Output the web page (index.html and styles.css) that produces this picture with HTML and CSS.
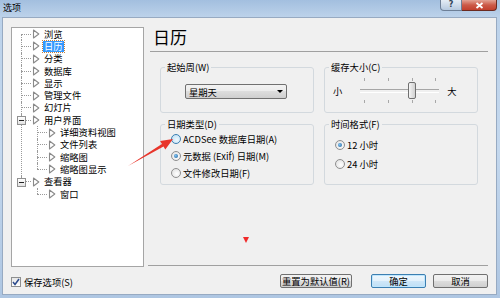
FILE: index.html
```html
<!DOCTYPE html>
<html lang="zh-CN">
<head>
    <meta charset="UTF-8">
    <title>选项</title>
    <link rel="stylesheet" href="styles.css">
</head>
<body>

<svg width="0" height="0" style="position: absolute;">
    <symbol id="tri" viewBox="0 0 8 10">
        <path d="M1.5 1 L6.8 5 L1.5 9 Z" fill="#fff" stroke="#8a8a8a" stroke-width="1.1" stroke-linejoin="round"/>
    </symbol>
</svg>

<div class="window">
    <div class="titlebar">
        <span class="title">选项</span>
        <div class="caption-buttons">
            <span class="cap-help">?</span>
            <span class="cap-close">
                <svg width="9" height="7" viewBox="0 0 9 7"><path d="M1.5 1 L7.5 6 M7.5 1 L1.5 6" stroke="#fff" stroke-width="1.8"/></svg>
            </span>
        </div>
    </div>

    <div class="client">
        <div class="main">
            <ul class="tree">
                <li><span class="node"><svg class="tri"><use href="#tri"/></svg>浏览</span></li>
                <li><span class="node"><svg class="tri"><use href="#tri"/></svg><span class="selected">日历</span></span></li>
                <li><span class="node"><svg class="tri"><use href="#tri"/></svg>分类</span></li>
                <li><span class="node"><svg class="tri"><use href="#tri"/></svg>数据库</span></li>
                <li><span class="node"><svg class="tri"><use href="#tri"/></svg>显示</span></li>
                <li><span class="node"><svg class="tri"><use href="#tri"/></svg>管理文件</span></li>
                <li><span class="node"><svg class="tri"><use href="#tri"/></svg>幻灯片</span></li>
                <li>
                    <b class="toggle"></b>
                    <span class="node"><svg class="tri"><use href="#tri"/></svg>用户界面</span>
                    <ul>
                        <li><span class="node"><svg class="tri"><use href="#tri"/></svg>详细资料视图</span></li>
                        <li><span class="node"><svg class="tri"><use href="#tri"/></svg>文件列表</span></li>
                        <li><span class="node"><svg class="tri"><use href="#tri"/></svg>缩略图</span></li>
                        <li><span class="node"><svg class="tri"><use href="#tri"/></svg>缩略图显示</span></li>
                    </ul>
                </li>
                <li>
                    <b class="toggle"></b>
                    <span class="node"><svg class="tri"><use href="#tri"/></svg>查看器</span>
                    <ul>
                        <li><span class="node"><svg class="tri"><use href="#tri"/></svg>窗口</span></li>
                    </ul>
                </li>
            </ul>

            <div class="page">
                <h1 class="page-title">日历</h1>
                <div class="groups">
                    <fieldset class="group">
                        <legend>起始周(W)</legend>
                        <div class="combo"><span>星期天</span><i class="combo-arrow"></i></div>
                    </fieldset>

                    <fieldset class="group">
                        <legend>缓存大小(C)</legend>
                        <div class="cache-row">
                            <span>小</span>
                            <div class="slider">
                                <div class="ticks"><i></i><i></i><i></i><i></i></div>
                                <div class="track"><span class="thumb"></span></div>
                                <div class="ticks"><i></i><i></i><i></i><i></i></div>
                            </div>
                            <span>大</span>
                        </div>
                    </fieldset>

                    <fieldset class="group">
                        <legend>日期类型(D)</legend>
                        <div class="radios radios-date">
                            <label class="radio"><span class="radio-box hover"></span>ACDSee 数据库日期(A)</label>
                            <label class="radio"><span class="radio-box checked"></span>元数据 (Exif) 日期(M)</label>
                            <label class="radio"><span class="radio-box"></span>文件修改日期(F)</label>
                        </div>
                    </fieldset>

                    <fieldset class="group">
                        <legend>时间格式(F)</legend>
                        <div class="radios radios-time">
                            <label class="radio"><span class="radio-box checked"></span>12 小时</label>
                            <label class="radio"><span class="radio-box"></span>24 小时</label>
                        </div>
                    </fieldset>
                </div>
            </div>
        </div>

        <div class="footer">
            <label class="check">
                <span class="check-box">
                    <svg width="8" height="8" viewBox="0 0 8 8"><path d="M1 4 L3 6.5 L7 1" fill="none" stroke="#2b4a8c" stroke-width="1.5"/></svg>
                </span>
                保存选项(S)
            </label>
            <div class="buttons">
                <button class="btn btn-reset">重置为默认值(R)</button>
                <button class="btn btn-default">确定</button>
                <button class="btn">取消</button>
            </div>
        </div>
    </div>

    <!-- annotation drawn over the dialog -->
    <svg class="marks" width="500" height="298" viewBox="0 0 500 298">
        <polygon points="128,166 163.5,146.5 165.3,149.5 173,139 160.1,140.9 161.9,143.9" fill="#e8352b"/>
        <polygon points="243,237 249,237 246,243" fill="#f02a2a"/>
    </svg>
</div>

</body>
</html>
```

FILE: styles.css
```css
* {
    box-sizing: border-box;
}

body {
    margin: 0;
    font-family: "Noto Sans CJK SC", "Noto Sans", sans-serif;
    font-size: 9.3px;
    line-height: 12px;
    color: #000;
    background: #fff;
}

.window {
    position: relative;
    width: 500px;
    height: 298px;
    display: flex;
    flex-direction: column;
    padding: 0 3px 3px 2px;
    background: linear-gradient(to bottom, #a3bfdf 0%, #bcd2ea 17px, #c4d8ee 50%, #aec6e2 100%);
}

.titlebar {
    height: 17px;
    display: flex;
    justify-content: space-between;
    align-items: flex-start;
}

.title {
    padding-left: 1px;
    line-height: 16px;
    font-size: 9px;
}

.caption-buttons {
    display: flex;
}

.cap-help {
    width: 22px;
    height: 11px;
    border: 1px solid #6d7f97;
    border-top: none;
    border-radius: 0 0 0 4px;
    background: linear-gradient(#e4ecf5, #b6c9df);
    font: bold 8px/10px "DejaVu Sans", sans-serif;
    color: #2f3f55;
    text-align: center;
}

.cap-close {
    width: 35px;
    height: 11px;
    display: flex;
    align-items: center;
    justify-content: center;
    border: 1px solid #6b2a20;
    border-top: none;
    border-left: none;
    border-radius: 0 0 4px 0;
    background: linear-gradient(#e3a394, #cc5a48 50%, #c2402d);
}

.client {
    flex: 1;
    display: flex;
    flex-direction: column;
    background: #f0f0f0;
    border: 1px solid #97aac2;
    padding: 9px 8px 0 8px;
}

.main {
    display: flex;
    gap: 4px;
    align-items: flex-start;
}

/* tree */
.tree,
.tree ul {
    list-style: none;
    margin: 0;
    padding: 0;
}

.tree {
    width: 133px;
    height: 240px;
    border: 1px solid #a5a5a5;
    background: #fff;
}

.tree ul {
    margin-left: 16px;
}

.tree li {
    position: relative;
}

.tree li::before {
    content: "";
    position: absolute;
    left: 9px;
    top: 0;
    bottom: 0;
    border-left: 1px dotted #9a9a9a;
}

.tree > li:first-child::before {
    top: 6px;
}

.tree li:last-child::before {
    bottom: auto;
    height: 6px;
}

.node {
    display: flex;
    align-items: center;
    height: 12.3px;
    line-height: 11px;
    white-space: nowrap;
}

.node::before {
    content: "";
    width: 10px;
    margin-left: 9px;
    border-top: 1px dotted #9a9a9a;
}

.tri {
    width: 8px;
    height: 10px;
    margin: 0 4px 0 1px;
}

.toggle {
    position: absolute;
    left: 5px;
    top: 2px;
    width: 9px;
    height: 9px;
    border: 1px solid #919191;
    background: linear-gradient(#fff, #e2e2e2);
    z-index: 1;
}

.toggle::after {
    content: "";
    position: absolute;
    left: 1px;
    top: 3px;
    width: 5px;
    height: 1px;
    background: #222;
}

.selected {
    margin-left: -1px;
    padding: 0 1px;
    background: #3399ff;
    color: #fff;
    outline: 1px dotted #c28040;
}

/* right page */
.page {
    width: 340px;
    height: 239px;
    border-bottom: 1px solid #a0a0a0;
}

.page-title {
    margin: 0 0 0 2px;
    padding: 0 0 4px 3px;
    font-size: 17px;
    font-weight: normal;
    line-height: 20px;
    border-bottom: 1px solid #a0a0a0;
}

.groups {
    display: grid;
    grid-template-columns: 154px 154px;
    grid-template-rows: 52px 67px;
    column-gap: 10px;
    row-gap: 5px;
    margin: 9px 0 0 12px;
}

.group {
    margin: 0;
    padding: 0;
    min-width: 0;
    border: 1px solid #d3d9de;
    border-radius: 3px;
}

.group legend {
    margin-left: 4px;
    padding: 0 2px;
    line-height: 12px;
}

.combo {
    display: flex;
    align-items: center;
    justify-content: space-between;
    width: 102px;
    height: 15px;
    margin: 11px 0 0 24px;
    padding: 0 3px 0 3px;
    border: 1px solid #707070;
    border-radius: 2px;
    background: linear-gradient(#f2f2f2, #ebebeb 50%, #dddddd 50%, #cfcfcf);
}

.combo-arrow {
    width: 0;
    height: 0;
    border-left: 3px solid transparent;
    border-right: 3px solid transparent;
    border-top: 3px solid #000;
}

.cache-row {
    display: flex;
    align-items: center;
    margin: 5px 0 0 8px;
}

.slider {
    width: 79px;
    height: 25px;
    margin: 0 8px 0 18px;
    display: flex;
    flex-direction: column;
}

.ticks {
    height: 3px;
    display: flex;
    justify-content: space-between;
    padding: 0 3px 0 4px;
}

.ticks i {
    width: 1px;
    height: 3px;
    background: #a8a8a8;
}

.track {
    position: relative;
    flex: 1;
}

.track::before {
    content: "";
    position: absolute;
    left: 0;
    right: 0;
    top: 8px;
    height: 2px;
    border-top: 1px solid #a6a6a6;
    border-bottom: 1px solid #fff;
}

.thumb {
    position: absolute;
    left: 48px;
    top: 1px;
    width: 8px;
    height: 17px;
    border: 1px solid #707070;
    border-radius: 2px;
    background: linear-gradient(to right, #f6f6f6, #e2e2e2 50%, #d2d2d2);
}

.radios-date {
    padding-left: 10px;
}

.radios-time {
    padding: 5px 0 0 10px;
}

.radio {
    display: flex;
    align-items: center;
    gap: 2px;
    height: 17px;
    white-space: nowrap;
}

.radios-time .radio {
    height: 19px;
}

.radio-box {
    position: relative;
    width: 10px;
    height: 10px;
    border: 1px solid #8f8f8f;
    border-radius: 50%;
    background: radial-gradient(circle at 60% 60%, #fff, #dcdcdc);
}

.radio-box.hover {
    border-color: #3c7fb1;
    background: radial-gradient(circle at 60% 60%, #eef8fe, #b8dcf3);
}

.radio-box.checked::after {
    content: "";
    position: absolute;
    left: 2px;
    top: 2px;
    width: 4px;
    height: 4px;
    border-radius: 50%;
    background: radial-gradient(circle at 40% 40%, #7ec3f3, #1d5b94);
}

/* footer */
.footer {
    flex: 1;
    display: flex;
    align-items: center;
}

.check {
    display: flex;
    align-items: center;
    gap: 3px;
    margin-top: 3px;
}

.check-box {
    display: flex;
    align-items: center;
    justify-content: center;
    width: 10px;
    height: 10px;
    border: 1px solid #8e8f8f;
    background: linear-gradient(#e6e6e6, #fff);
}

.buttons {
    margin-left: auto;
    display: flex;
    gap: 7px;
}

.btn {
    width: 55px;
    height: 14px;
    padding: 0;
    font: inherit;
    line-height: 12px;
    color: #000;
    border: 1px solid #707070;
    border-radius: 2px;
    background: linear-gradient(#f2f2f2, #ebebeb 50%, #dddddd 50%, #cfcfcf);
    white-space: nowrap;
}

.btn-reset {
    width: 72px;
    margin-right: 12px;
}

.btn-default {
    border-color: #3c7fb1;
    box-shadow: inset 0 0 0 1px #bfe6fd;
    background: linear-gradient(#eef7fd, #e3f1fb 50%, #cfe7f8 50%, #bfdff5);
}

.marks {
    position: absolute;
    left: 0;
    top: 0;
    pointer-events: none;
}
```
